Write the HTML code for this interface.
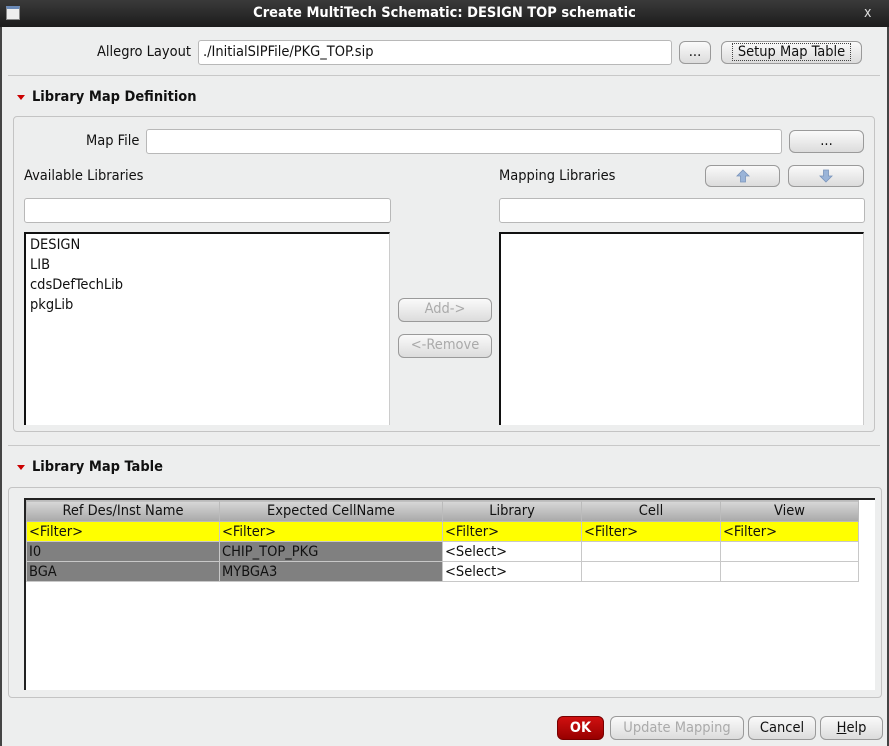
<!DOCTYPE html>
<html><head><style>
*{box-sizing:border-box;margin:0;padding:0}
body{width:889px;height:746px;background:#edeeee;font-family:"DejaVu Sans Condensed","Liberation Sans",sans-serif;font-size:14.5px;color:#111;position:relative;overflow:hidden}
.a{position:absolute}
.title{left:0;top:0;width:889px;height:27px;background:linear-gradient(#3a3a3a,#1c1c1c);color:#fff;font-weight:bold;font-size:14.5px;text-align:center;line-height:27px}
.inp{position:absolute;background:#fff;border:1px solid #b8b8b8;border-radius:3px;padding-left:4px;line-height:22px}
.btn{position:absolute;border:1px solid #9a9a9a;border-radius:6px;background:linear-gradient(#fafafa,#dcdcdc);text-align:center;line-height:20px}
.dis{color:#aaa}
.grp{position:absolute;border:1px solid #c4c4c4;border-radius:4px}
.sep{position:absolute;height:1px;background:#c8c8c8}
.tri{position:absolute;width:0;height:0;border-left:4px solid transparent;border-right:4px solid transparent;border-top:5px solid #c00}
.lst{position:absolute;background:#fff;border-top:2px solid #111;border-left:2px solid #111;border-right:1px solid #ccc}
.lst div{height:20px;line-height:20px;padding-left:4px}
table{border-collapse:collapse;font-size:14.5px}
td{border:1px solid #c8c8c8;height:20px;padding-left:2px;white-space:nowrap;line-height:18px}
th{font-weight:normal;background:linear-gradient(#d8d8d8,#a8a8a8);border:1px solid #bbb;height:21px}
</style></head><body>
<div class="a" style="left:0;top:27px;width:2px;height:719px;background:#444"></div>
<div class="a" style="right:0;top:27px;width:2px;height:719px;background:#444"></div>
<div class="a title">Create MultiTech Schematic: DESIGN TOP schematic</div>
<div class="a" style="left:6px;top:6px;width:14px;height:14px;background:#eee;border:1px solid #888;border-top:3px solid #6a8ab8"></div>
<div class="a" style="left:864px;top:5px;color:#ddd;font-size:14px">x</div>

<div class="a" style="left:97px;top:44px">Allegro Layout</div>
<div class="inp" style="left:198px;top:40px;width:474px;height:25px">./InitialSIPFile/PKG_TOP.sip</div>
<div class="btn" style="left:679px;top:41px;width:32px;height:23px">...</div>
<div class="btn" style="left:721px;top:41px;width:141px;height:23px;line-height:21px"><span style="border:1px dotted #444;padding:0 5px">Setup Map Table</span></div>
<div class="sep" style="left:8px;top:75px;width:872px"></div>

<div class="tri" style="left:17px;top:95px"></div>
<div class="a" style="left:32px;top:89px;font-weight:bold">Library Map Definition</div>
<div class="grp" style="left:13px;top:116px;width:862px;height:316px"></div>
<div class="a" style="left:86px;top:133px">Map File</div>
<div class="inp" style="left:146px;top:129px;width:636px;height:25px"></div>
<div class="btn" style="left:789px;top:130px;width:75px;height:23px">...</div>
<div class="a" style="left:24px;top:168px">Available Libraries</div>
<div class="a" style="left:499px;top:168px">Mapping Libraries</div>
<div class="btn" style="left:705px;top:165px;width:75px;height:22px"><svg width="14" height="14" viewBox="0 0 14 14" style="margin-top:3px"><path d="M7 1 L13 7 H9.5 V13 H4.5 V7 H1 Z" fill="#9ab4d8" stroke="#7a94bb" stroke-width="0.8"/></svg></div>
<div class="btn" style="left:788px;top:165px;width:76px;height:22px"><svg width="14" height="14" viewBox="0 0 14 14" style="margin-top:3px"><path d="M7 13 L13 7 H9.5 V1 H4.5 V7 H1 Z" fill="#9ab4d8" stroke="#7a94bb" stroke-width="0.8"/></svg></div>
<div class="inp" style="left:24px;top:198px;width:367px;height:25px"></div>
<div class="inp" style="left:499px;top:198px;width:366px;height:25px"></div>
<div class="lst" style="left:24px;top:232px;width:366px;height:193px;padding-top:1px">
<div>DESIGN</div><div>LIB</div><div>cdsDefTechLib</div><div>pkgLib</div></div>
<div class="lst" style="left:499px;top:232px;width:365px;height:193px"></div>
<div class="btn dis" style="left:398px;top:298px;width:94px;height:24px">Add-&gt;</div>
<div class="btn dis" style="left:398px;top:334px;width:94px;height:24px">&lt;-Remove</div>
<div class="sep" style="left:8px;top:445px;width:872px"></div>

<div class="tri" style="left:17px;top:465px"></div>
<div class="a" style="left:32px;top:459px;font-weight:bold">Library Map Table</div>
<div class="grp" style="left:8px;top:487px;width:874px;height:211px"></div>
<div class="a" style="left:24px;top:498px;width:851px;height:192px;background:#fff;border-top:2px solid #222;border-left:2px solid #222">
<table style="width:833px">
<tr><th style="width:193px">Ref Des/Inst Name</th><th style="width:223px">Expected CellName</th><th style="width:139px">Library</th><th style="width:139px">Cell</th><th>View</th></tr>
<tr style="background:#ffff00"><td>&lt;Filter&gt;</td><td>&lt;Filter&gt;</td><td>&lt;Filter&gt;</td><td>&lt;Filter&gt;</td><td>&lt;Filter&gt;</td></tr>
<tr><td style="background:#808080">I0</td><td style="background:#808080">CHIP_TOP_PKG</td><td>&lt;Select&gt;</td><td></td><td></td></tr>
<tr><td style="background:#808080">BGA</td><td style="background:#808080">MYBGA3</td><td>&lt;Select&gt;</td><td></td><td></td></tr>
</table></div>

<div class="btn" style="left:557px;top:716px;width:47px;height:24px;background:linear-gradient(#d01010,#980000);color:#fff;font-weight:bold;border-color:#700;line-height:22px">OK</div>
<div class="btn dis" style="left:610px;top:716px;width:134px;height:24px;line-height:22px">Update Mapping</div>
<div class="btn" style="left:748px;top:716px;width:68px;height:24px;line-height:22px">Cancel</div>
<div class="btn" style="left:820px;top:716px;width:63px;height:24px;line-height:22px"><u>H</u>elp</div>
</body></html>
